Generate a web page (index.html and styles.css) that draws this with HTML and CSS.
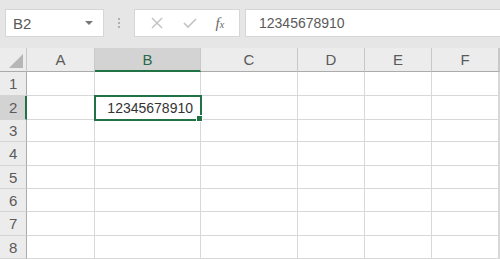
FILE: index.html
```html
<!DOCTYPE html>
<html lang="ja">
<head>
    <meta charset="UTF-8">
    <title>Sheet</title>
    <link rel="stylesheet" href="styles.css">
</head>
<body>
    <div class="toolbar">
        <div class="name-box">
            <span>B2</span>
            <span class="caret"></span>
        </div>
        <div class="grip">
            <span></span><span></span><span></span>
        </div>
        <div class="fx-buttons">
            <svg class="icon" width="14" height="14" viewBox="0 0 14 14">
                <path d="M2 2 L12 12 M12 2 L2 12" stroke="#c4c4c4" stroke-width="1.5" fill="none"/>
            </svg>
            <svg class="icon" width="16" height="14" viewBox="0 0 16 14">
                <path d="M2 7 L6 11 L14 3" stroke="#c4c4c4" stroke-width="1.7" fill="none"/>
            </svg>
            <span class="fx">f<small>x</small></span>
        </div>
        <div class="formula">12345678910</div>
    </div>

    <div class="sheet">
        <div class="corner"><span class="tri"></span></div>
        <div class="col-head">A</div>
        <div class="col-head active">B</div>
        <div class="col-head">C</div>
        <div class="col-head">D</div>
        <div class="col-head">E</div>
        <div class="col-head">F</div>
        <div class="col-head"></div>

        <div class="row-head">1</div>
        <div class="cell"></div><div class="cell"></div><div class="cell"></div><div class="cell"></div><div class="cell"></div><div class="cell"></div><div class="cell"></div>

        <div class="row-head active">2</div>
        <div class="cell"></div><div class="cell selected">12345678910</div><div class="cell"></div><div class="cell"></div><div class="cell"></div><div class="cell"></div><div class="cell"></div>

        <div class="row-head">3</div>
        <div class="cell"></div><div class="cell"></div><div class="cell"></div><div class="cell"></div><div class="cell"></div><div class="cell"></div><div class="cell"></div>

        <div class="row-head">4</div>
        <div class="cell"></div><div class="cell"></div><div class="cell"></div><div class="cell"></div><div class="cell"></div><div class="cell"></div><div class="cell"></div>

        <div class="row-head">5</div>
        <div class="cell"></div><div class="cell"></div><div class="cell"></div><div class="cell"></div><div class="cell"></div><div class="cell"></div><div class="cell"></div>

        <div class="row-head">6</div>
        <div class="cell"></div><div class="cell"></div><div class="cell"></div><div class="cell"></div><div class="cell"></div><div class="cell"></div><div class="cell"></div>

        <div class="row-head">7</div>
        <div class="cell"></div><div class="cell"></div><div class="cell"></div><div class="cell"></div><div class="cell"></div><div class="cell"></div><div class="cell"></div>

        <div class="row-head">8</div>
        <div class="cell"></div><div class="cell"></div><div class="cell"></div><div class="cell"></div><div class="cell"></div><div class="cell"></div><div class="cell"></div>
    </div>
</body>
</html>
```

FILE: styles.css
```css
body {
    margin: 0;
    padding: 0;
    width: 500px;
    height: 259px;
    overflow: hidden;
    background-color: #ffffff;
    font-family: "Liberation Sans", Arial, sans-serif;
    color: #444;
}

/* formula bar */
.toolbar {
    display: flex;
    align-items: center;
    height: 48px;
    padding: 0 0 2px 5px;
    box-sizing: border-box;
    background-color: #e6e6e6;
}

.name-box {
    display: flex;
    align-items: center;
    justify-content: space-between;
    width: 99px;
    height: 28px;
    padding: 0 10px 0 7px;
    box-sizing: border-box;
    background-color: #fff;
    border: 1px solid #d6d6d6;
    font-size: 15px;
    color: #595959;
}

.caret {
    width: 0;
    height: 0;
    border-left: 4px solid transparent;
    border-right: 4px solid transparent;
    border-top: 4px solid #777;
}

.grip {
    display: flex;
    flex-direction: column;
    gap: 2px;
    margin: 0 14px;
}

.grip span {
    width: 2px;
    height: 2px;
    background-color: #b0b0b0;
}

.fx-buttons {
    display: flex;
    align-items: center;
    justify-content: space-around;
    width: 106px;
    height: 28px;
    padding: 0 6px 0 6px;
    box-sizing: border-box;
    background-color: #fff;
    border: 1px solid #d6d6d6;
}

.fx {
    font-family: "Liberation Serif", "Times New Roman", serif;
    font-style: italic;
    font-size: 15px;
    color: #666;
}

.fx small {
    font-size: 10px;
}

.formula {
    flex: 1;
    height: 28px;
    line-height: 26px;
    margin-left: 5px;
    padding-left: 13px;
    box-sizing: border-box;
    background-color: #fff;
    border: 1px solid #d6d6d6;
    border-right: none;
    font-size: 14px;
    color: #5a5a5a;
}

/* grid */
.sheet {
    display: grid;
    grid-template-columns: 27px 68px 106px 97px 67px 67px 67px 1px;
    grid-template-rows: 24px 24px 24px 22px 24px 23px 23px 24px 23px;
    background-color: #fff;
}

.corner,
.col-head,
.row-head {
    display: flex;
    align-items: center;
    justify-content: center;
    box-sizing: border-box;
    background-color: #ececec;
    font-size: 15px;
    color: #5a5a5a;
}

.corner {
    position: relative;
    border-right: 1px solid #c8c8c8;
    border-bottom: 1px solid #ababab;
}

.tri {
    position: absolute;
    right: 3px;
    bottom: 3px;
    width: 0;
    height: 0;
    border-left: 14px solid transparent;
    border-bottom: 14px solid #b6b6b6;
}

.col-head {
    border-right: 1px solid #c8c8c8;
    border-bottom: 1px solid #ababab;
}

.col-head.active {
    background-color: #d3d3d3;
    color: #2a6a48;
    border-bottom: 2px solid #217346;
}

.row-head {
    justify-content: flex-start;
    padding-left: 9px;
    border-right: 1px solid #ababab;
    border-bottom: 1px solid #d4d4d4;
}

.row-head.active {
    background-color: #d3d3d3;
    border-right: 2px solid #217346;
}

.cell {
    box-sizing: border-box;
    border-right: 1px solid #d8d8d8;
    border-bottom: 1px solid #d8d8d8;
    font-size: 14px;
    color: #333;
}

.cell.selected {
    position: relative;
    display: flex;
    align-items: center;
    justify-content: flex-end;
    padding-right: 7px;
    outline: 2px solid #217346;
    outline-offset: -1px;
}

.cell.selected::after {
    content: "";
    position: absolute;
    right: -3px;
    bottom: -3px;
    width: 5px;
    height: 5px;
    background-color: #217346;
    border: 1px solid #fff;
}
```
